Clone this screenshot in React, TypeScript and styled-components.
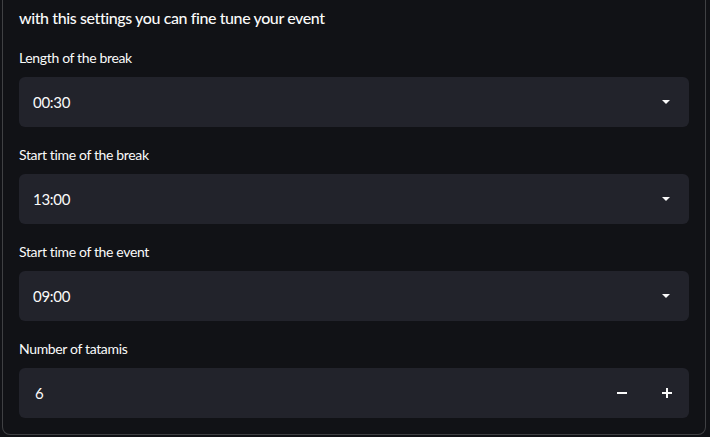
import React from "react";
import styled, { createGlobalStyle } from "styled-components";

const Bg = "#111216";
const FieldBg = "#22232b";
const Text = "#fafafa";
const Border = "rgba(250, 250, 250, 0.2)";

const GlobalStyle = createGlobalStyle`
  html, body {
    margin: 0;
    padding: 0;
    background: ${Bg};
    color: ${Text};
    font-family: Lato, "Noto Sans", sans-serif;
  }
`;

const Page = styled.div`
  width: 710px;
  height: 437px;
  overflow: hidden;
  padding: 0 4px 3px 2px;
  box-sizing: border-box;
`;

const Form = styled.div`
  border: 1px solid ${Border};
  border-top: none;
  border-radius: 0 0 8px 8px;
  padding: 6px 16px 16px;
  display: flex;
  flex-direction: column;
  gap: 18px;
`;

const Intro = styled.p`
  margin: 0;
  font-size: 16px;
  line-height: 24px;
  font-weight: 500;
  letter-spacing: -0.4px;
`;

const Field = styled.div`
  display: flex;
  flex-direction: column;
  gap: 10px;
`;

const Label = styled.label`
  font-size: 14px;
  line-height: 19px;
  letter-spacing: -0.35px;
`;

const Box = styled.div`
  height: 50px;
  background: ${FieldBg};
  border-radius: 6px;
  display: flex;
  align-items: center;
  font-size: 15px;
  letter-spacing: -0.3px;
`;

const Value = styled.span<{ $inset?: number }>`
  flex: 1;
  padding-left: ${(p) => p.$inset ?? 14}px;
`;

const Caret = styled.span`
  width: 0;
  height: 0;
  border-left: 4px solid transparent;
  border-right: 4px solid transparent;
  border-top: 4px solid ${Text};
  margin-right: 19px;
`;

const StepButton = styled.button`
  width: 45px;
  height: 50px;
  border: none;
  background: transparent;
  color: ${Text};
  display: flex;
  align-items: center;
  justify-content: center;
  padding: 0;
`;

const Select = ({ label, value }: { label: string; value: string }) => (
  <Field>
    <Label>{label}</Label>
    <Box>
      <Value>{value}</Value>
      <Caret />
    </Box>
  </Field>
);

const App = () => (
  <Page>
    <GlobalStyle />
    <Form>
      <Intro>with this settings you can fine tune your event</Intro>
      <Select label="Length of the break" value="00:30" />
      <Select label="Start time of the break" value="13:00" />
      <Select label="Start time of the event" value="09:00" />
      <Field>
        <Label>Number of tatamis</Label>
        <Box>
          <Value $inset={16}>6</Value>
          <StepButton aria-label="minus">
            <svg width="10" height="10" viewBox="0 0 10 10">
              <rect x="0" y="4" width="10" height="2" fill={Text} />
            </svg>
          </StepButton>
          <StepButton aria-label="plus">
            <svg width="10" height="10" viewBox="0 0 10 10">
              <rect x="0" y="4" width="10" height="2" fill={Text} />
              <rect x="4" y="0" width="2" height="10" fill={Text} />
            </svg>
          </StepButton>
        </Box>
      </Field>
    </Form>
  </Page>
);

export default App;
